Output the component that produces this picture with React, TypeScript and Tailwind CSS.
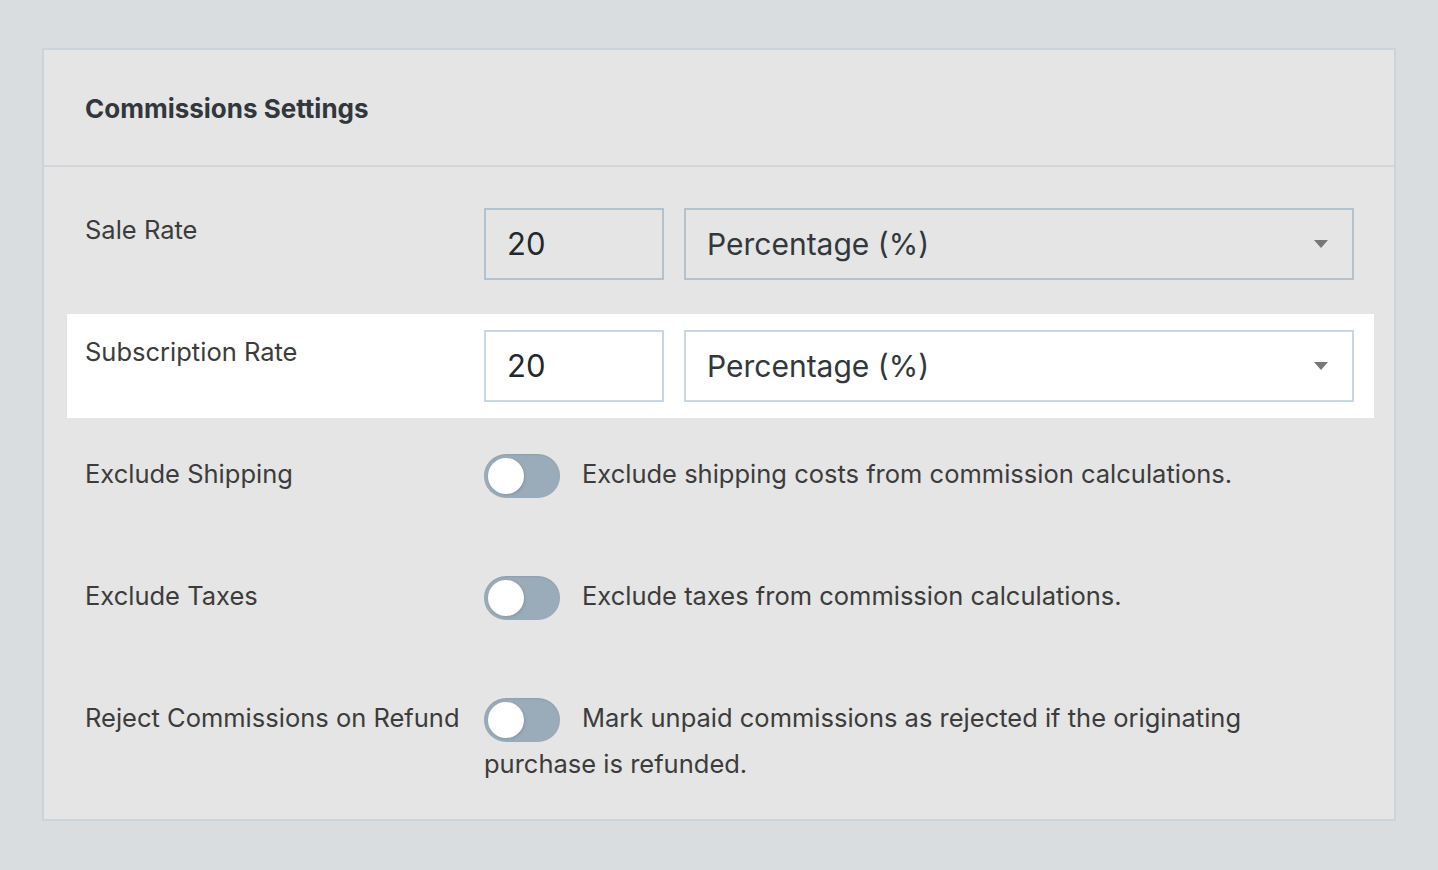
const Toggle = () => (
  <span className="relative inline-block w-[76px] h-[44px] rounded-full bg-[#9aacb9] align-middle mr-[22px] shadow-[inset_0_1px_2px_rgba(0,0,0,0.08)]">
    <span className="absolute left-[4px] top-[4px] w-[36px] h-[36px] rounded-full bg-white shadow-[1px_1px_3px_rgba(0,0,0,0.12)]" />
  </span>
);

const Arrow = () => (
  <svg width="16" height="10" viewBox="0 0 16 10" className="absolute right-[23px] top-1/2 -translate-y-1/2">
    <path d="M1 1 L15 1 L8 9 Z" fill="#777" />
  </svg>
);

const RateRow = ({ label, highlight }: { label: string; highlight?: boolean }) => (
  <div className={`flex min-h-[104px] pl-[18px] pr-[20px] pt-[16px] pb-[16px] mb-[18px] ${highlight ? "bg-white" : ""}`}>
    <div className="w-[399px] shrink-0 pt-[4px] leading-[36px]">{label}</div>
    <div className="flex flex-1 gap-[20px]">
      <div
        className={`w-[180px] h-[72px] border-2 flex items-center pl-[21px] text-[31px] text-[#23282d] ${
          highlight ? "border-[#c8d7e1]" : "border-[#b4c2cd]"
        }`}
      >
        20
      </div>
      <div
        className={`relative flex-1 h-[72px] border-2 flex items-center pl-[21px] text-[30px] text-[#32373c] ${
          highlight ? "border-[#c8d7e1]" : "border-[#b4c2cd]"
        }`}
      >
        Percentage (%)
        <Arrow />
      </div>
    </div>
  </div>
);

const ToggleRow = ({ label, children }: { label: string; children: React.ReactNode }) => (
  <div className="flex min-h-[104px] pl-[18px] pr-[20px] pt-[16px] pb-[16px] mb-[18px]">
    <div className="w-[399px] shrink-0 pt-[4px] leading-[36px]">{label}</div>
    <div className="flex-1 leading-[43px]">
      <Toggle />
      {children}
    </div>
  </div>
);

export default function App() {
  return (
    <div
      className="min-h-screen w-full bg-[#d9dde0] pt-[48px] px-[42px] text-[25.5px] text-[#3c3c3c]"
      style={{ fontFamily: "Inter, 'Noto Sans', sans-serif" }}
    >
      <div className="border-2 border-[#ccd3d9] bg-[#e5e5e5]">
        <div className="h-[117px] flex items-center px-[41px] border-b-2 border-[#d1d6da]">
          <h2 className="text-[26px] font-bold text-[#32373c] pt-[2px]">Commissions Settings</h2>
        </div>
        <div className="pl-[23px] pr-[20px] pt-[25px] pb-0">
          <RateRow label="Sale Rate" />
          <RateRow label="Subscription Rate" highlight />
          <ToggleRow label="Exclude Shipping">Exclude shipping costs from commission calculations.</ToggleRow>
          <ToggleRow label="Exclude Taxes">Exclude taxes from commission calculations.</ToggleRow>
          <ToggleRow label="Reject Commissions on Refund">
            Mark unpaid commissions as rejected if the originating
            <br />
            purchase is refunded.
          </ToggleRow>
        </div>
      </div>
    </div>
  );
}
